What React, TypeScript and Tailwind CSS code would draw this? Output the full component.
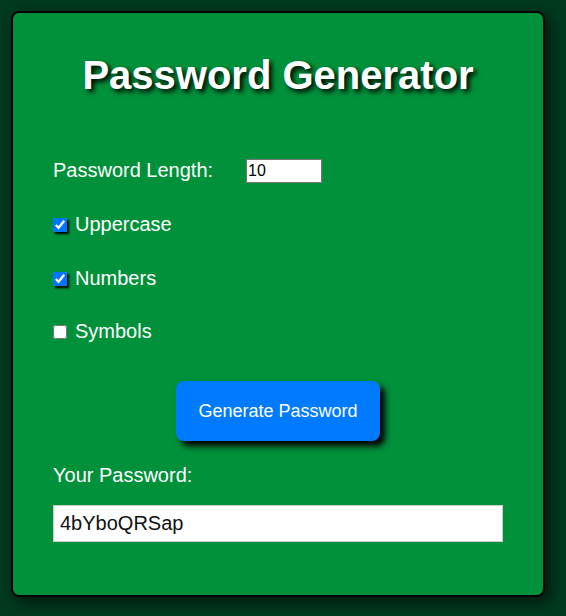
import React, { useState } from "react";

export default function App() {
  const [length, setLength] = useState("10");
  const [upper, setUpper] = useState(true);
  const [nums, setNums] = useState(true);
  const [syms, setSyms] = useState(false);
  const [pw, setPw] = useState("4bYboQRSap");

  const generate = () => {
    let chars = "abcdefghijklmnopqrstuvwxyz";
    if (upper) chars += "ABCDEFGHIJKLMNOPQRSTUVWXYZ";
    if (nums) chars += "0123456789";
    if (syms) chars += "!@#$%^&*()_+-=";
    const n = Math.max(1, Math.min(64, parseInt(length) || 10));
    let out = "";
    for (let i = 0; i < n; i++) out += chars[Math.floor(Math.random() * chars.length)];
    setPw(out);
  };

  const row = (label: string, checked: boolean, set: (v: boolean) => void, mt: string) => (
    <label className={`flex items-center h-[24px] gap-[8px] text-[20px] leading-[24px] text-white ${mt}`}>
      <input
        type="checkbox"
        checked={checked}
        onChange={(e) => set(e.target.checked)}
        className={`m-0 w-[14px] h-[14px] mt-[1px] accent-[#0075ff] ${checked ? "shadow-[2px_2px_2px_#000]" : ""}`}
      />
      <span>{label}</span>
    </label>
  );

  return (
    <div
      className="min-h-[616px] w-[566px] bg-[#013a1f] p-[11px]"
      style={{ fontFamily: '"Liberation Sans", Arial, sans-serif' }}
    >
      <div className="w-[534px] h-[586px] bg-[#00913a] border-2 border-black rounded-[8px] shadow-[5px_5px_15px_rgba(0,0,0,0.6)] pt-[39px] px-[40px] flex flex-col">
        <h1 className="text-center text-white font-bold text-[40px] leading-[46px] [text-shadow:3px_3px_5px_#000]">
          Password Generator
        </h1>

        <div className="flex items-start mt-[60px] h-[24px]">
          <span className="text-white text-[20px] leading-[24px] w-[193px]">Password Length:</span>
          <input
            type="text"
            value={length}
            onChange={(e) => setLength(e.target.value)}
            className="mt-[1px] w-[76px] h-[24px] bg-white border border-[#767676] px-[1px] text-[16px] text-black outline-none"
          />
        </div>

        {row("Uppercase", upper, setUpper, "mt-[30px]")}
        {row("Numbers", nums, setNums, "mt-[30px]")}
        {row("Symbols", syms, setSyms, "mt-[29px]")}

        <div className="flex justify-center mt-[38px]">
          <button
            onClick={generate}
            className="w-[204px] h-[60px] bg-[#007bff] text-white text-[18px] rounded-[8px] shadow-[5px_5px_6px_#000]"
          >
            Generate Password
          </button>
        </div>

        <div className="mt-[22px] text-white text-[20px] leading-[24px]">Your Password:</div>

        <input
          readOnly
          value={pw}
          className="mt-[18px] w-[450px] h-[37px] bg-white border border-[#cccccc] px-[6px] text-[20px] text-[#111] outline-none"
        />
      </div>
    </div>
  );
}
